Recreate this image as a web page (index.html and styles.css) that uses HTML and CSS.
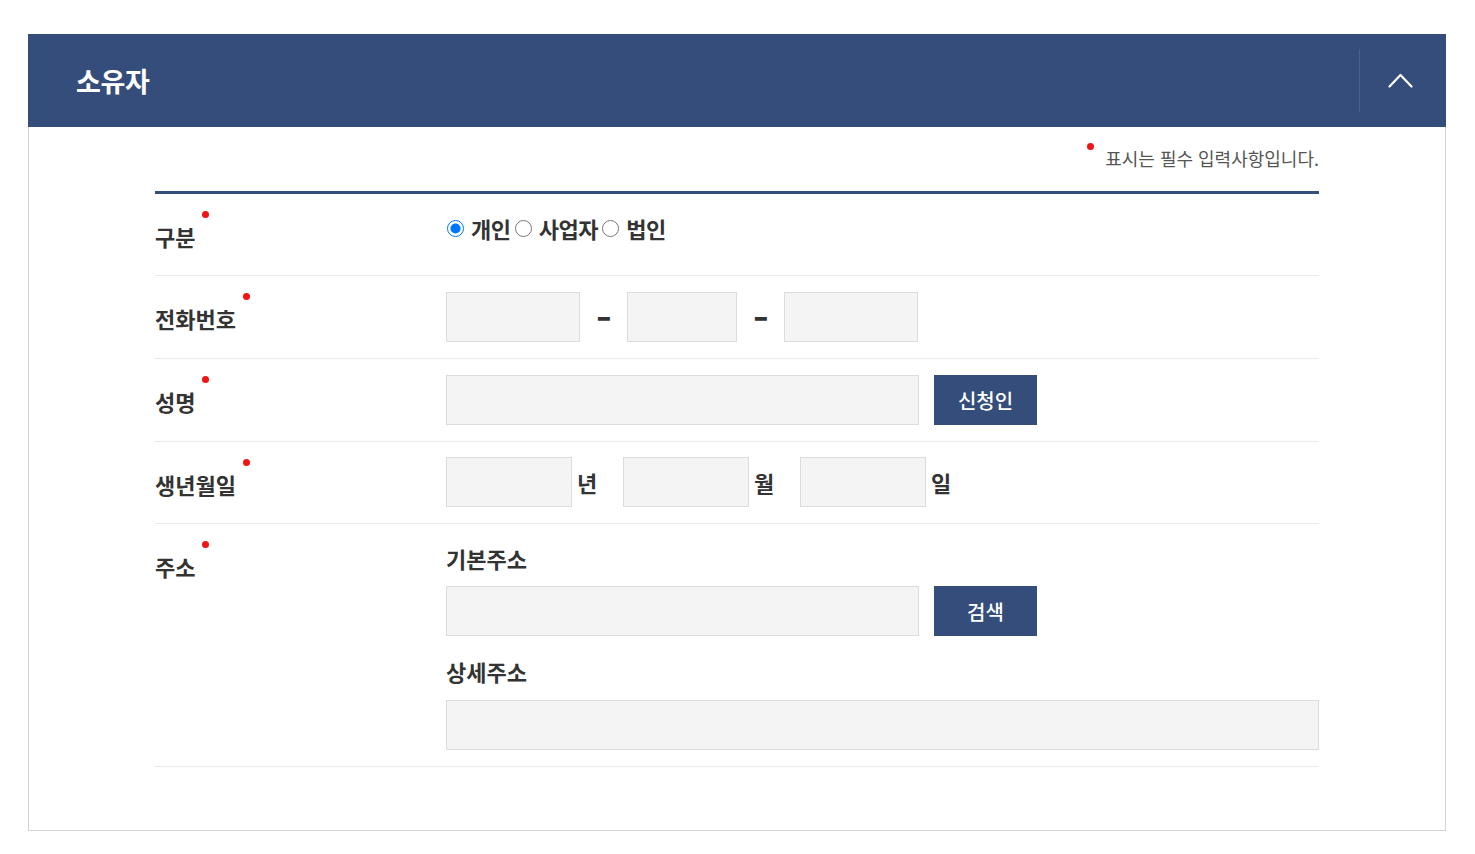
FILE: index.html
```html
<!DOCTYPE html>
<html lang="ko">
<head>
<meta charset="utf-8">
<title>소유자</title>
<link rel="stylesheet" href="styles.css">
</head>
<body>
<section class="panel">
  <header class="panel-head">
    <h2 class="panel-title">소유자</h2>
    <button class="panel-toggle" type="button" aria-label="접기">
      <svg width="25" height="15" viewBox="0 0 25 15"><polyline points="1.5,13.5 12.5,2 23.5,13.5" fill="none" stroke="#fff" stroke-width="2.2" stroke-linecap="round" stroke-linejoin="round"/></svg>
    </button>
  </header>
  <div class="panel-body">
    <p class="note"><span class="req-before">표시는 필수 입력사항입니다.</span></p>
    <div class="form">
      <div class="row row-first">
        <div class="row-label"><span class="req">구분</span></div>
        <div class="row-value">
          <div class="radios">
            <label class="radio"><input type="radio" name="type" checked><span>개인</span></label>
            <label class="radio"><input type="radio" name="type"><span>사업자</span></label>
            <label class="radio"><input type="radio" name="type"><span>법인</span></label>
          </div>
        </div>
      </div>
      <div class="row">
        <div class="row-label"><span class="req">전화번호</span></div>
        <div class="row-value inline">
          <input class="field w-134" type="text">
          <span class="sep"><span class="dash">-</span></span>
          <input class="field w-110" type="text">
          <span class="sep"><span class="dash">-</span></span>
          <input class="field w-134" type="text">
        </div>
      </div>
      <div class="row">
        <div class="row-label"><span class="req">성명</span></div>
        <div class="row-value inline">
          <input class="field w-473" type="text">
          <button class="btn" type="button">신청인</button>
        </div>
      </div>
      <div class="row row-short">
        <div class="row-label"><span class="req">생년월일</span></div>
        <div class="row-value inline">
          <input class="field w-126" type="text"><span class="unit">년</span>
          <input class="field w-126" type="text"><span class="unit">월</span>
          <input class="field w-126" type="text"><span class="unit">일</span>
        </div>
      </div>
      <div class="row">
        <div class="row-label"><span class="req">주소</span></div>
        <div class="row-value">
          <div class="sub-label">기본주소</div>
          <div class="inline">
            <input class="field w-473" type="text">
            <button class="btn" type="button">검색</button>
          </div>
          <div class="sub-label second">상세주소</div>
          <input class="field w-full" type="text">
        </div>
      </div>
    </div>
  </div>
</section>
</body>
</html>
```

FILE: styles.css
```css
* { box-sizing: border-box; }
html, body { margin: 0; padding: 0; background: #fff; }
body {
  font-family: "Noto Sans CJK KR", "Noto Sans", sans-serif;
  color: #333;
}
.panel {
  margin: 34px 29px 0 28px;
}
.panel-head {
  height: 93px;
  background: #344d7a;
  display: flex;
  align-items: center;
  justify-content: space-between;
}
.panel-title {
  margin: 0 0 0 48px;
  color: #fff;
  font-size: 27px;
  font-weight: 700;
  letter-spacing: -0.4px;
  line-height: 1;
}
.panel-toggle {
  height: 63px;
  width: 87px;
  padding: 0 5px 0 0;
  margin: 0;
  background: transparent;
  border: 0;
  border-left: 1px solid #4a6190;
  display: flex;
  align-items: center;
  justify-content: center;
}
.panel-body {
  border: 1px solid #d4d4d4;
  border-top: 0;
  padding: 19px 126px 63px 126px;
}
.note {
  margin: 0 0 21px;
  text-align: right;
  font-size: 18px;
  line-height: 24px;
  letter-spacing: 0;
  color: #555;
}
.req-before { position: relative; }
.req-before::before {
  content: "";
  position: absolute;
  left: -18px;
  top: -2px;
  width: 7px;
  height: 7px;
  border-radius: 50%;
  background: #f01414;
}
.form {
  border-top: 3px solid #344d7a;
}
.row {
  display: grid;
  grid-template-columns: 291px 1fr;
  border-bottom: 1px solid #eaeaea;
}
.row-label {
  padding-top: 25px;
  font-size: 22px;
  font-weight: 700;
  line-height: 34px;
  letter-spacing: 0;
  color: #333;
}
.req { position: relative; }
.req::after {
  content: "";
  position: absolute;
  right: -14px;
  top: -9px;
  width: 7px;
  height: 7px;
  border-radius: 50%;
  background: #f01414;
}
.row-value {
  padding: 16px 0;
  min-height: 82px;
}
.row-first .row-value { min-height: 81px; }
.row-short .row-value { padding: 15px 0 16px; min-height: 81px; }
.inline {
  display: flex;
  align-items: center;
}
.radios {
  display: flex;
  align-items: center;
  height: 40px;
  margin-top: -2px;
}
.radio {
  display: flex;
  align-items: center;
  font-size: 22px;
  font-weight: 700;
  letter-spacing: -0.4px;
  color: #333;
  margin-right: 3px;
}
.radio input {
  width: 17px;
  height: 17px;
  margin: 0 7px 0 1px;
}
.field {
  height: 50px;
  margin: 0;
  padding: 0 12px;
  background: #f4f4f4;
  border: 1px solid #dcdcdc;
  border-radius: 0;
  font-family: inherit;
  font-size: 17px;
  outline: none;
}
.w-134 { width: 134px; }
.w-110 { width: 110px; }
.w-126 { width: 126px; }
.w-473 { width: 473px; }
.w-full { width: 100%; display: block; }
.sep {
  width: 47px;
  display: flex;
  justify-content: center;
  align-items: center;
}
.dash {
  font-size: 30px;
  font-weight: 900;
  line-height: 1;
  color: #333;
  transform: scaleX(1.4);
}
.unit {
  width: 51px;
  padding-left: 5px;
  font-size: 22px;
  font-weight: 700;
  color: #333;
}
.btn {
  width: 103px;
  height: 50px;
  margin: 0 0 0 15px;
  padding: 0;
  border: 0;
  background: #344d7a;
  color: #fff;
  font-family: inherit;
  font-size: 20px;
  font-weight: 500;
  letter-spacing: 0;
}
.sub-label {
  font-size: 22px;
  font-weight: 700;
  line-height: 36px;
  letter-spacing: 0;
  color: #333;
  margin-bottom: 10px;
}
.sub-label.second {
  margin-top: 17px;
  margin-bottom: 11px;
}
```
